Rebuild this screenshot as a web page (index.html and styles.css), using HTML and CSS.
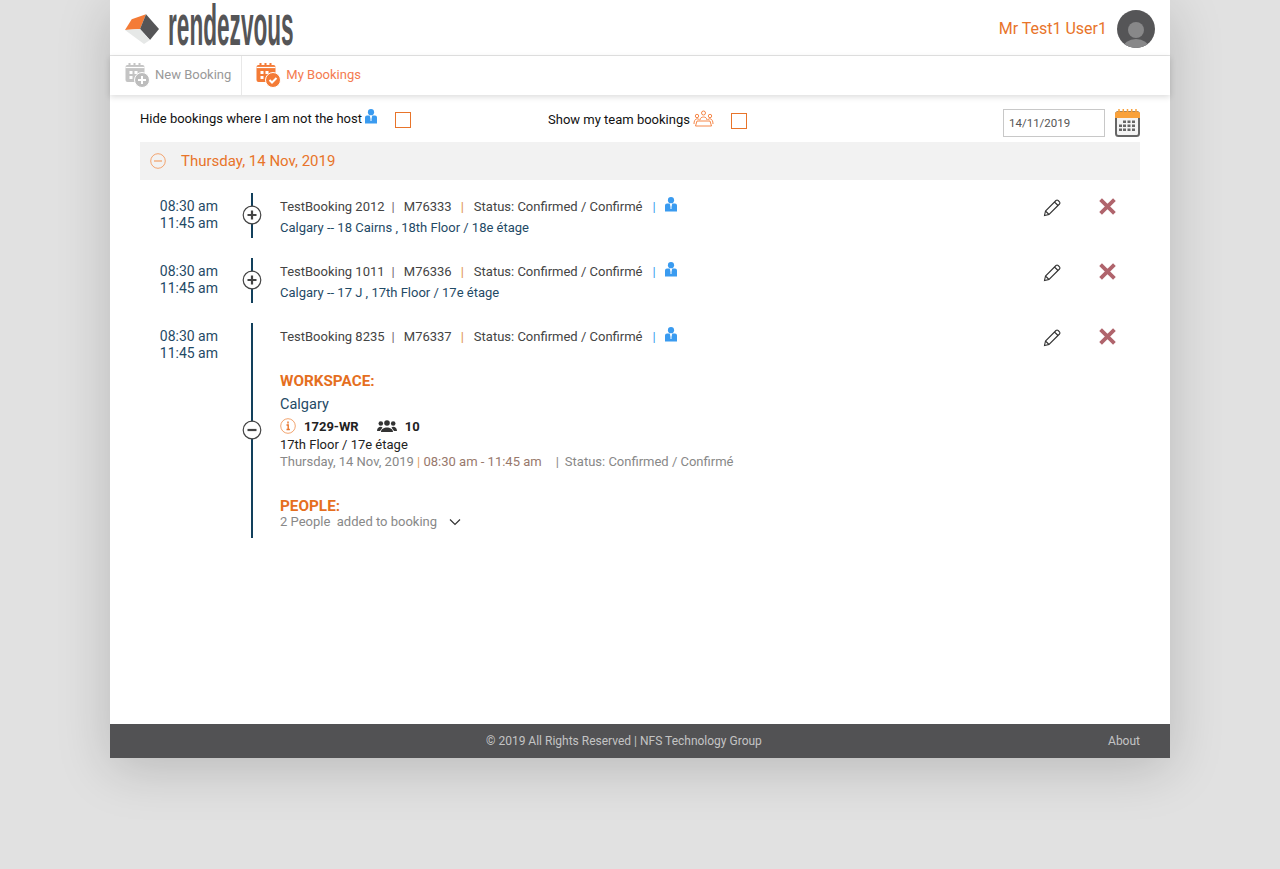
FILE: index.html
```html
<!DOCTYPE html>
<html lang="en">
  <head>
      <meta charset="UTF-8">
      <meta name="viewport" content="width=device-width, initial-scale=1.0">
      <title>Rendezvous - My Bookings</title>
      <link rel="stylesheet" href="styles.css">
  </head>
  <body>
      <svg class="sprites" width="0" height="0">
          <defs>
              <symbol id="host" viewBox="0 0 14 15">
                  <circle cx="7" cy="3.200" r="3.100" fill="#3a9bf0"/>
                  <path d="M1 8.500a2 2 0 0 1 2-2h2.600L7 10 8.400 6.500H11a2 2 0 0 1 2 2v6H1z" fill="#3a9bf0"/>
                  <path d="M7 8v4" stroke="#fff" stroke-width="1"/>
              </symbol>
              <symbol id="pencil" viewBox="0 0 20 20">
                  <path d="M2.500 17.500l1-4.500L14 2.500a1.500 1.500 0 0 1 2.100 0l1.400 1.400a1.500 1.500 0 0 1 0 2.100L7 16.500zM3.500 13l3.500 3.500M12.500 4l3.500 3.500" fill="none" stroke="#333" stroke-width="1.100"/>
              </symbol>
              <symbol id="cross" viewBox="0 0 16 16">
                  <path d="M1.500 1.500l13 13M14.500 1.500l-13 13" fill="none" stroke="#b0646c" stroke-width="3.600"/>
              </symbol>
              <symbol id="plus-circle" viewBox="0 0 20 20">
                  <circle cx="10" cy="10" r="8.800" fill="#fff" stroke="#444" stroke-width="1.200"/>
                  <path d="M5.500 10h9M10 5.500v9" stroke="#444" stroke-width="2.200"/>
              </symbol>
              <symbol id="minus-circle" viewBox="0 0 20 20">
                  <circle cx="10" cy="10" r="8.800" fill="#fff" stroke="#444" stroke-width="1.200"/>
                  <path d="M5.500 10h9" stroke="#444" stroke-width="2.200"/>
              </symbol>
          </defs>
      </svg>

      <div class="page">
          <header class="top">
              <div class="brand">
                  <svg class="brand-cube" width="35" height="31" viewBox="0 0 35 31">
                      <path d="M0 16L6.700 5.300 21 0.300 15 15z" fill="#f47b36"/>
                      <path d="M21 0.300L34 15l-9 11-10-11z" fill="#555557"/>
                      <path d="M0 16l15-1 10 11-6 4z" fill="#e6e8e7"/>
                  </svg>
                  <span class="brand-text">rendezvous</span>
              </div>
              <div class="user">
                  <span class="user-name">Mr Test1 User1</span>
                  <svg width="38" height="38" viewBox="0 0 38 38">
                      <defs><clipPath id="avatar"><circle cx="19" cy="19" r="19"/></clipPath></defs>
                      <circle cx="19" cy="19" r="19" fill="#555557"/>
                      <g clip-path="url(#avatar)" fill="#888889">
                          <circle cx="19" cy="20" r="8"/>
                          <ellipse cx="19" cy="38" rx="13" ry="9"/>
                      </g>
                  </svg>
              </div>
          </header>

          <nav class="tabs">
              <a class="tab" href="#">
                  <svg width="26" height="26" viewBox="0 0 26 26">
                      <rect x="0.500" y="3" width="19" height="17" rx="2" fill="#c4c4c4"/>
                      <path d="M4.500 1v4M9.500 1v4M14.500 1v4" stroke="#c4c4c4" stroke-width="2"/>
                      <path d="M0.500 5.500h19" stroke="#fff" stroke-width="1.200"/>
                      <path d="M4.500 9h3v3h-3zM9.500 9h3v3h-3zM4.500 14h3v3h-3z" fill="#fff"/>
                      <circle cx="17" cy="18" r="7.500" fill="#bdbdbd" stroke="#fff"/>
                      <path d="M13 18h8M17 14v8" stroke="#fff" stroke-width="2"/>
                  </svg>
                  <span>New Booking</span>
              </a>
              <a class="tab tab-active" href="#">
                  <svg width="26" height="26" viewBox="0 0 26 26">
                      <rect x="0.500" y="3" width="19" height="17" rx="2" fill="#f47b36"/>
                      <path d="M4.500 1v4M9.500 1v4M14.500 1v4" stroke="#f47b36" stroke-width="2"/>
                      <path d="M0.500 5.500h19" stroke="#fff" stroke-width="1.200"/>
                      <path d="M4.500 9h3v3h-3zM9.500 9h3v3h-3zM4.500 14h3v3h-3z" fill="#fff"/>
                      <circle cx="17" cy="18" r="7.500" fill="#f47b36" stroke="#fff"/>
                      <path d="M13.500 18l2.500 2.500 4.500-4.500" fill="none" stroke="#fff" stroke-width="2"/>
                  </svg>
                  <span>My Bookings</span>
              </a>
          </nav>

          <main class="content">
              <div class="filters">
                  <label class="filter filter-host">
                      <span class="filter-text">Hide bookings where I am not the host</span>
                      <svg class="filter-host-icon" width="14" height="15"><use href="#host"/></svg>
                      <span class="check"></span>
                  </label>
                  <label class="filter filter-team">
                      <span class="filter-text">Show my team bookings</span>
                      <svg width="21" height="18" viewBox="0 0 21 18" fill="none" stroke="#f47b36" stroke-width="0.900">
                          <circle cx="10.500" cy="3" r="2"/>
                          <circle cx="4" cy="6" r="1.700"/>
                          <circle cx="17" cy="6" r="1.700"/>
                          <path d="M7 10c0-4 7-4 7 0M1 14c0-6 4-6 5.500-4M20 14c0-6-4-6-5.500-4M4 11h13l1.500 5h-16z"/>
                      </svg>
                      <span class="check"></span>
                  </label>
                  <div class="date-pick">
                      <input class="date-input" type="text" value="14/11/2019">
                      <svg width="25" height="28" viewBox="0 0 25 28">
                          <rect x="1" y="3" width="23" height="24" rx="2.500" fill="#f4f4f4" stroke="#666" stroke-width="2"/>
                          <path d="M0 5a2.500 2.500 0 0 1 2.500-2.500h20A2.500 2.500 0 0 1 25 5v4H0z" fill="#f9a13a"/>
                          <path d="M4 0v4M8.300 0v4M12.500 0v4M16.700 0v4M21 0v4" stroke="#f9a13a" stroke-width="1.500"/>
                          <path d="M8 11.500h3V14H8zM12.500 11.500h3V14h-3zM17 11.500h3V14h-3zM4 15.500h3V18H4zM8 15.500h3V18H8zM12.500 15.500h3V18h-3zM17 15.500h3V18h-3zM4 19.500h3V22H4zM8 19.500h3V22H8zM12.500 19.500h3V22h-3zM17 19.500h3V22h-3z" fill="#666"/>
                      </svg>
                  </div>
              </div>

              <div class="day">
                  <svg width="16" height="16" viewBox="0 0 16 16" fill="none" stroke="#f2a46f">
                      <circle cx="8" cy="8" r="7.300"/>
                      <path d="M4 8h8" stroke-width="1.300"/>
                  </svg>
                  <span>Thursday, 14 Nov, 2019</span>
              </div>

              <div class="bookings">
                  <div class="booking">
                      <div class="times"><div>08:30 am</div><div>11:45 am</div></div>
                      <div class="rail"><svg class="rail-toggle" width="20" height="20"><use href="#plus-circle"/></svg></div>
                      <div class="details">
                          <div class="summary">
                              <span>TestBooking 2012</span><i class="sep">|</i>
                              <span>M76333</span><i class="sep sep-orange">|</i>
                              <span>Status: Confirmed / Confirmé</span><i class="sep sep-blue">|</i>
                              <svg width="14" height="15"><use href="#host"/></svg>
                          </div>
                          <div class="place">Calgary -- 18 Cairns , 18th Floor / 18e étage</div>
                      </div>
                      <div class="actions">
                          <svg width="20" height="20"><use href="#pencil"/></svg>
                          <svg width="17" height="17"><use href="#cross"/></svg>
                      </div>
                  </div>

                  <div class="booking">
                      <div class="times"><div>08:30 am</div><div>11:45 am</div></div>
                      <div class="rail"><svg class="rail-toggle" width="20" height="20"><use href="#plus-circle"/></svg></div>
                      <div class="details">
                          <div class="summary">
                              <span>TestBooking 1011</span><i class="sep">|</i>
                              <span>M76336</span><i class="sep sep-orange">|</i>
                              <span>Status: Confirmed / Confirmé</span><i class="sep sep-blue">|</i>
                              <svg width="14" height="15"><use href="#host"/></svg>
                          </div>
                          <div class="place">Calgary -- 17 J , 17th Floor / 17e étage</div>
                      </div>
                      <div class="actions">
                          <svg width="20" height="20"><use href="#pencil"/></svg>
                          <svg width="17" height="17"><use href="#cross"/></svg>
                      </div>
                  </div>

                  <div class="booking booking-open">
                      <div class="times"><div>08:30 am</div><div>11:45 am</div></div>
                      <div class="rail"><svg class="rail-toggle" width="20" height="20"><use href="#minus-circle"/></svg></div>
                      <div class="details">
                          <div class="summary">
                              <span>TestBooking 8235</span><i class="sep">|</i>
                              <span>M76337</span><i class="sep sep-orange">|</i>
                              <span>Status: Confirmed / Confirmé</span><i class="sep sep-blue">|</i>
                              <svg width="14" height="15"><use href="#host"/></svg>
                          </div>
                          <h3 class="section-title">WORKSPACE:</h3>
                          <div class="city">Calgary</div>
                          <div class="room">
                              <svg width="16" height="16" viewBox="0 0 16 16" fill="none" stroke="#f2a46f">
                                  <circle cx="8" cy="8" r="7.300"/>
                                  <path d="M6.500 7h1.700v4.500M6.500 11.500h3.400M8 3.500v2" stroke="#e8742a" stroke-width="1.400"/>
                              </svg>
                              <b class="room-code">1729-WR</b>
                              <svg class="room-people" width="20" height="14" viewBox="0 0 20 14" fill="#333">
                                  <circle cx="10" cy="4" r="2.800"/>
                                  <circle cx="3.800" cy="4.500" r="2.300"/>
                                  <circle cx="16.200" cy="4.500" r="2.300"/>
                                  <path d="M4 13c0-6 12-6 12 0zM0 12c0-4 4-5 5.500-3.500L3 12zM20 12c0-4-4-5-5.500-3.500L17 12z"/>
                              </svg>
                              <b>10</b>
                          </div>
                          <div class="floor">17th Floor / 17e étage</div>
                          <div class="when">Thursday, 14 Nov, 2019 <i class="when-bar">|</i> <span class="when-time">08:30 am - 11:45 am</span><i class="when-sep">|</i>Status: Confirmed / Confirmé</div>
                          <h3 class="section-title section-people">PEOPLE:</h3>
                          <div class="people">
                              <span>2 People&nbsp; added to booking</span>
                              <svg width="12" height="8" viewBox="0 0 12 8" fill="none" stroke="#333" stroke-width="1.200"><path d="M1 1.500l5 5 5-5"/></svg>
                          </div>
                      </div>
                      <div class="actions">
                          <svg width="20" height="20"><use href="#pencil"/></svg>
                          <svg width="17" height="17"><use href="#cross"/></svg>
                      </div>
                  </div>
              </div>
          </main>

          <footer class="bottom">
              <span class="copyright">&copy; 2019 All Rights Reserved | NFS Technology Group</span>
              <a class="about" href="#">About</a>
          </footer>
      </div>
  </body>
</html>
```

FILE: styles.css
```css
* {
    box-sizing: border-box;
}
body {
    margin: 0;
    min-height: 869px;
    background-color: #e1e1e1;
    font-family: Roboto, "Liberation Sans", sans-serif;
    font-size: 13px;
    color: #333;
}
a {
    text-decoration: none;
    color: inherit;
}
i {
    font-style: normal;
}
.sprites {
    display: block;
}
.page {
    width: 1060px;
    height: 758px;
    margin: 0 auto;
    background: #fff;
    display: flex;
    flex-direction: column;
    box-shadow: 0 10px 50px rgba(0, 0, 0, 0.18);
}

/* header */
.top {
    height: 56px;
    flex: none;
    padding: 2px 15px 0;
    display: flex;
    align-items: center;
    justify-content: space-between;
    border-bottom: 1px solid #e4e4e4;
}
.brand {
    display: flex;
    align-items: center;
    gap: 8px;
    height: 50px;
}
.brand-cube {
    margin-top: 2px;
}
.brand-text {
    display: block;
    width: max-content;
    margin-top: -8px;
    font-family: "Liberation Sans", sans-serif;
    font-size: 58px;
    font-weight: 700;
    line-height: 66px;
    color: #555557;
    transform: scaleX(0.39);
    transform-origin: left top;
}
.user {
    display: flex;
    align-items: center;
    gap: 10px;
}
.user-name {
    font-size: 16px;
    color: #e8742a;
}

/* tabs */
.tabs {
    height: 39px;
    flex: none;
    display: flex;
    box-shadow: 0 2px 6px rgba(0, 0, 0, 0.14);
}
.tab {
    display: flex;
    align-items: center;
    gap: 4px;
    padding: 0 10px 2px 15px;
    color: #999;
    border-right: 1px solid #e8e8e8;
}
.tab-active {
    color: #f47b50;
    padding-left: 14px;
    border-right: 0;
}

/* main */
.content {
    flex: 1;
    padding: 0 30px;
}
.filters {
    height: 47px;
    display: flex;
    align-items: center;
    color: #111;
}
.filter {
    display: flex;
    align-items: center;
}
.filter-host {
    width: 408px;
}
.filter-host-icon {
    margin: 0 0 5px 2px;
}
.filter-host .check {
    margin-top: 2px;
}
.filter-team .filter-text {
    margin: 2px 3px 0 0;
}
.check {
    width: 16px;
    height: 16px;
    margin-left: 17px;
    margin-top: 4px;
    border: 1px solid #e8742a;
    background: #fff;
}
.date-pick {
    margin-left: auto;
    display: flex;
    align-items: center;
    gap: 10px;
    margin-top: 8px;
}
.date-input {
    width: 102px;
    height: 28px;
    padding: 0 5px;
    border: 1px solid #c8c8c8;
    font-family: inherit;
    font-size: 11.500px;
    color: #555;
    outline: none;
}
.day {
    height: 38px;
    padding: 0 10px;
    display: flex;
    align-items: center;
    gap: 15px;
    background: #f2f2f2;
    font-size: 15px;
    color: #e8742a;
}

/* bookings */
.bookings {
    padding-top: 13px;
    display: flex;
    flex-direction: column;
    gap: 20px;
}
.booking {
    display: flex;
    min-height: 45px;
}
.times {
    width: 78px;
    padding-top: 5px;
    text-align: right;
    font-size: 14px;
    line-height: 17px;
    color: #1f4a66;
}
.rail {
    width: 2px;
    margin-left: 33px;
    padding-bottom: 1px;
    background: #12405c;
    display: flex;
    align-items: center;
    justify-content: center;
    flex: none;
}
.rail-toggle {
    flex: none;
}
.details {
    flex: 1;
    margin-left: 27px;
}
.summary {
    display: flex;
    align-items: center;
    height: 17px;
    margin-top: 5px;
    color: #444;
}
.summary svg {
    margin-bottom: 5px;
}
.sep {
    margin: 0 9px 0 7px;
    color: #6f5f6f;
}
.sep-orange {
    margin: 0 10px 0 9px;
    color: #e0923c;
}
.sep-blue {
    margin: 0 8px 0 10px;
    color: #3a9bf0;
}
.place {
    margin-top: 4px;
    line-height: 17px;
    color: #1f4a66;
}
.actions {
    width: 100px;
    display: flex;
    gap: 37px;
    align-items: flex-start;
    padding: 5px 0 0 2px;
}
.section-title {
    margin: 28px 0 0;
    font-size: 15.300px;
    line-height: 17px;
    font-weight: 700;
    color: #e56f1f;
}
.city {
    margin-top: 6px;
    font-size: 14.500px;
    line-height: 18px;
    color: #1f4a66;
}
.room {
    display: flex;
    align-items: center;
    height: 18px;
    margin-top: 3px;
    color: #222;
}
.room-code {
    margin-left: 8px;
}
.room-people {
    margin: 0 8px 0 18px;
}
.floor {
    line-height: 16px;
    margin-top: 2px;
    color: #222;
}
.when {
    line-height: 17px;
    color: #888;
}
.when-bar {
    color: #e8a060;
}
.when-time {
    color: #98786c;
}
.when-sep {
    margin: 0 6px 0 14px;
}
.section-people {
    margin-top: 28px;
}
.people {
    display: flex;
    align-items: center;
    gap: 12px;
    line-height: 14px;
    padding-bottom: 9px;
    color: #888;
}

/* footer */
.bottom {
    height: 34px;
    flex: none;
    padding: 0 30px;
    background: #525254;
    color: #c4c4c4;
    font-size: 12px;
    display: flex;
    align-items: center;
}
.copyright {
    margin-left: 346px;
}
.about {
    margin-left: auto;
}
```
